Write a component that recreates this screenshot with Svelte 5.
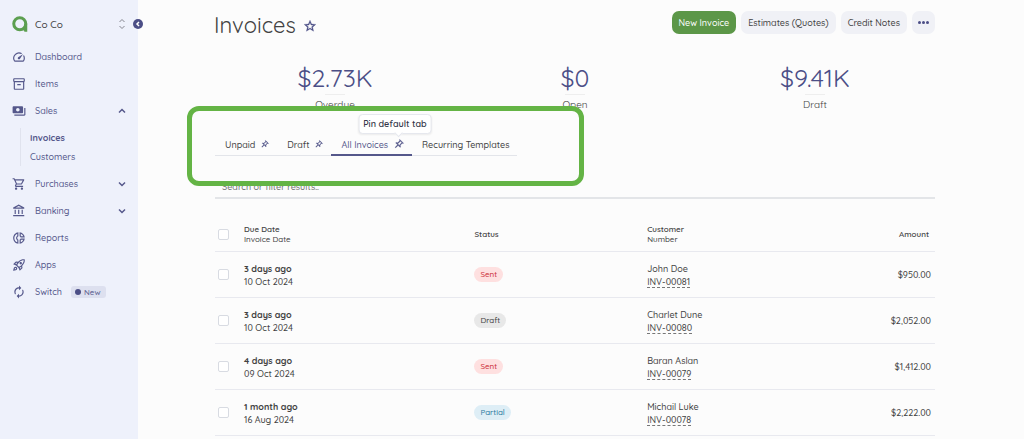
<script lang="ts">
	type Item = { label: string; icon: string; open?: boolean; children?: string[]; badge?: string }

	const icons: Record<string, string> = {
		speed: 'M20.38 8.57l-1.23 1.85a8 8 0 0 1-.22 7.58H5.07A8 8 0 0 1 15.58 6.85l1.85-1.23A10 10 0 0 0 3.35 19a2 2 0 0 0 1.72 1h13.85a2 2 0 0 0 1.74-1 10 10 0 0 0-.27-10.44zm-9.79 6.84a2 2 0 0 0 2.83 0l5.66-8.49-8.49 5.66a2 2 0 0 0 0 2.83z',
		box: 'M20 2H4c-1 0-2 .9-2 2v3.01c0 .72.43 1.34 1 1.69V20c0 1.1 1.1 2 2 2h14c.9 0 2-.9 2-2V8.7c.57-.35 1-.97 1-1.69V4c0-1.1-1-2-2-2zm-1 18H5V9h14v11zm1-13H4V4h16v3zM9 12h6v2H9z',
		payments: 'M19 14V6c0-1.1-.9-2-2-2H3c-1.1 0-2 .9-2 2v8c0 1.1.9 2 2 2h14c1.1 0 2-.9 2-2zm-9-1c-1.66 0-3-1.34-3-3s1.34-3 3-3 3 1.34 3 3-1.34 3-3 3zm13-6v11c0 1.1-.9 2-2 2H4v-2h17V7h2z',
		cart: 'M15.55 13c.75 0 1.41-.41 1.75-1.03l3.58-6.49A.996.996 0 0020.01 4H5.21l-.94-2H1v2h2l3.6 7.59-1.35 2.44C4.52 15.37 5.48 17 7 17h12v-2H7l1.1-2h7.45zM6.16 6h12.15l-2.76 5H8.53L6.16 6zM7 18c-1.1 0-1.99.9-1.99 2S5.9 22 7 22s2-.9 2-2-.9-2-2-2zm10 0c-1.1 0-1.99.9-1.99 2s.89 2 1.99 2 2-.9 2-2-.9-2-2-2z',
		bank: 'M6.5 10h-2v7h2v-7zm6 0h-2v7h2v-7zm8.5 9H2v2h19v-2zm-2.5-9h-2v7h2v-7zm-7-6.74L16.71 6H6.29l5.21-2.74m0-2.26L2 6v2h19V6l-9.5-5z',
		donut: 'M14.82 11h7.13c-.47-4.72-4.23-8.48-8.95-8.95v7.13c.85.31 1.51.97 1.82 1.82zM15 4.58C17 5.4 18.6 7 19.42 9h-3.43c-.28-.37-.62-.71-.99-.99V4.58zM2 12c0 5.19 3.95 9.45 9 9.95v-7.13C9.84 14.4 9 13.3 9 12c0-1.3.84-2.4 2-2.82V2.05c-5.05.5-9 4.76-9 9.95zm7-7.42v3.44c-1.23.92-2 2.39-2 3.98 0 1.59.77 3.06 2 3.99v3.44C6.04 18.24 4 15.35 4 12c0-3.35 2.04-6.24 5-7.42zm4 10.24v7.13c4.72-.47 8.48-4.23 8.95-8.95h-7.13c-.31.85-.97 1.51-1.82 1.82zm2 1.17c.37-.28.71-.61.99-.99h3.43C18.6 17 17 18.6 15 19.42v-3.43z',
		rocket: 'M6 15c-.83 0-1.58.34-2.12.88C2.7 17.06 2 22 2 22s4.94-.7 6.12-1.88A2.996 2.996 0 006 15zm.71 3.71c-.28.28-2.17.76-2.17.76s.47-1.88.76-2.17c.17-.19.42-.3.7-.3a1.003 1.003 0 01.71 1.71zm10.71-5.06c6.36-6.36 4.24-11.31 4.24-11.31S16.71.22 10.35 6.58l-2.49-.5a2.03 2.03 0 00-1.81.55L2 10.69l5 2.14L11.17 17l2.14 5 4.05-4.05c.47-.47.68-1.15.55-1.81l-.49-2.49zM7.41 10.83l-1.91-.82 1.97-1.97 1.44.29c-.57.83-1.08 1.7-1.5 2.5zm6.58 7.67l-.82-1.91c.8-.42 1.67-.93 2.49-1.5l.29 1.44-1.96 1.97zM16 12.24c-1.32 1.32-3.38 2.4-4.04 2.73l-2.93-2.93c.32-.65 1.4-2.71 2.73-4.04 4.68-4.68 8.23-3.99 8.23-3.99s.69 3.55-3.99 8.23zM15 11c1.1 0 2-.9 2-2s-.9-2-2-2-2 .9-2 2 .9 2 2 2z',
		renew: 'M12 6v3l4-4-4-4v3c-4.42 0-8 3.58-8 8 0 1.57.46 3.03 1.24 4.26L6.7 14.8A5.87 5.87 0 016 12c0-3.31 2.69-6 6-6zm6.76 1.74L17.3 9.2c.44.84.7 1.79.7 2.8 0 3.31-2.69 6-6 6v-3l-4 4 4 4v-3c4.42 0 8-3.58 8-8 0-1.57-.46-3.03-1.24-4.26z',
		star: 'M22 9.24l-7.19-.62L12 2 9.19 8.63 2 9.24l5.46 4.73L5.82 21 12 17.27 18.18 21l-1.63-7.03L22 9.24zM12 15.4l-3.76 2.27 1-4.28-3.32-2.88 4.38-.38L12 6.1l1.71 4.04 4.38.38-3.32 2.88 1 4.28L12 15.4z',
		pin: 'M14 4v5c0 1.12.37 2.16 1 3H9c.65-.86 1-1.9 1-3V4h4m3-2H7c-.55 0-1 .45-1 1s.45 1 1 1h1v5c0 1.66-1.34 3-3 3v2h5.97v7l1 1 1-1v-7H19v-2c-1.66 0-3-1.34-3-3V4h1c.55 0 1-.45 1-1s-.45-1-1-1z',
	}

	const menu: Item[] = [
		{ label: 'Dashboard', icon: 'speed' },
		{ label: 'Items', icon: 'box' },
		{ label: 'Sales', icon: 'payments', open: true, children: ['Invoices', 'Customers'] },
		{ label: 'Purchases', icon: 'cart', open: false },
		{ label: 'Banking', icon: 'bank', open: false },
		{ label: 'Reports', icon: 'donut' },
		{ label: 'Apps', icon: 'rocket' },
		{ label: 'Switch', icon: 'renew', badge: 'New' },
	]

	const totals = [
		{ amount: '$2.73K', label: 'Overdue' },
		{ amount: '$0', label: 'Open' },
		{ amount: '$9.41K', label: 'Draft' },
	]

	const tabs = [
		{ label: 'Unpaid', pin: true },
		{ label: 'Draft', pin: true },
		{ label: 'All Invoices', pin: true },
		{ label: 'Recurring Templates', pin: false },
	]
	let current = $state('All Invoices')

	const invoices = [
		{ due: '3 days ago', date: '10 Oct 2024', status: 'Sent', customer: 'John Doe', number: 'INV-00081', amount: '$950.00' },
		{ due: '3 days ago', date: '10 Oct 2024', status: 'Draft', customer: 'Charlet Dune', number: 'INV-00080', amount: '$2,052.00' },
		{ due: '4 days ago', date: '09 Oct 2024', status: 'Sent', customer: 'Baran Aslan', number: 'INV-00079', amount: '$1,412.00' },
		{ due: '1 month ago', date: '16 Aug 2024', status: 'Partial', customer: 'Michail Luke', number: 'INV-00078', amount: '$2,222.00' },
	]
</script>

{#snippet icon(name: string)}
	<svg class="icon" viewBox="0 0 24 24" aria-hidden="true"><path d={icons[name]} /></svg>
{/snippet}

<div class="app">
	<aside>
		<div class="company">
			<svg class="logo" viewBox="0 0 32 32" aria-hidden="true">
				<circle cx="15.500" cy="15.500" r="12" />
				<path d="M27.500 15.500V31.500M22 24l5 4" />
			</svg>
			<span>Co Co</span>
			<button class="switcher" aria-label="Switch company">
				<svg viewBox="0 0 8 12"><path d="M1.500 4L4 1.500 6.500 4M1.500 8L4 10.500 6.500 8" /></svg>
			</button>
			<button class="collapse" aria-label="Collapse menu">
				<svg viewBox="0 0 10 10"><path d="M6 3L4 5l2 2" /></svg>
			</button>
		</div>

		<nav>
			{#each menu as item}
				<a href="#{item.label.toLowerCase()}" class="item">
					{@render icon(item.icon)}
					<span>{item.label}</span>
					{#if item.badge}
						<span class="new">{item.badge}</span>
					{/if}
					{#if item.open !== undefined}
						<svg class="chevron" class:open={item.open} viewBox="0 0 8 6"><path d="M1 1.500l3 3 3-3" /></svg>
					{/if}
				</a>
				{#if item.children}
					<div class="sub">
						{#each item.children as child, i}
							<a href="#{child.toLowerCase()}" class:current={i === 0}>{child}</a>
						{/each}
					</div>
				{/if}
			{/each}
		</nav>
	</aside>

	<main>
		<header>
			<h1>Invoices</h1>
			<button class="star" aria-label="Add to favorites">{@render icon('star')}</button>
			<div class="actions">
				<button class="primary">New Invoice</button>
				<button>Estimates (Quotes)</button>
				<button>Credit Notes</button>
				<button class="more" aria-label="More actions"><i></i><i></i><i></i></button>
			</div>
		</header>

		<div class="totals">
			{#each totals as total}
				<a href="#{total.label.toLowerCase()}">
					<strong>{total.amount}</strong>
					<hr />
					<span>{total.label}</span>
				</a>
			{/each}
		</div>

		<div class="tabs-area">
			<div class="tabs">
				{#each tabs as tab}
					<div class="tab" class:active={current === tab.label}>
						<button onclick={() => (current = tab.label)}>{tab.label}</button>
						{#if tab.pin}
							<button class="pin" aria-label="Pin {tab.label}">
								{@render icon('pin')}
								{#if current === tab.label}
									<span class="tooltip">Pin default tab</span>
								{/if}
							</button>
						{/if}
					</div>
				{/each}
			</div>
			<div class="highlight"></div>
		</div>

		<input class="search" type="text" placeholder="Search or filter results.." aria-label="Search or filter results" />

		<table>
			<thead>
				<tr>
					<th class="check"><input type="checkbox" aria-label="Select all invoices" /></th>
					<th class="date">Due Date<br /><span>Invoice Date</span></th>
					<th class="status">Status</th>
					<th>Customer<br /><span>Number</span></th>
					<th class="amount">Amount</th>
				</tr>
			</thead>
			<tbody>
				{#each invoices as invoice}
					<tr>
						<td><input type="checkbox" aria-label="Select {invoice.number}" /></td>
						<td><b>{invoice.due}</b><br />{invoice.date}</td>
						<td><span class="pill {invoice.status.toLowerCase()}">{invoice.status}</span></td>
						<td>
							{invoice.customer}<br />
							<a href="#{invoice.number}">{invoice.number}</a>
						</td>
						<td class="amount">{invoice.amount}</td>
					</tr>
				{/each}
			</tbody>
		</table>
	</main>
</div>

<style>
	:global(body) {
		background: #fcfcfc;
	}

	.app {
		display: flex;
		min-height: 100vh;
		font-family: Quicksand, Lato, sans-serif;
		font-size: 9px;
		font-weight: 500;
		color: #424242;
	}

	button {
		padding: 0;
		border: 0;
		background: none;
		font: inherit;
		color: inherit;
		cursor: pointer;
	}

	a {
		color: inherit;
		text-decoration: none;
	}

	.icon {
		display: block;
		flex: none;
		width: 14px;
		height: 14px;
		fill: currentColor;
	}

	aside {
		flex: none;
		box-sizing: border-box;
		width: 138px;
		padding: 5px 12px 0;
		background: #eef1fb;
		color: #55588b;
	}

	.company {
		position: relative;
		display: flex;
		align-items: center;
		height: 38px;
		font-size: 10px;
		color: #424242;
	}

	.company span {
		flex: 1;
		margin-left: 7px;
	}

	.logo {
		width: 16px;
		height: 16px;
		fill: none;
		stroke: #5c9f50;
		stroke-width: 6;
	}

	.switcher svg {
		display: block;
		width: 8px;
		height: 12px;
		fill: none;
		stroke: #85868f;
	}

	.collapse {
		position: absolute;
		right: -17px;
		width: 10px;
		height: 10px;
		border-radius: 50%;
		background: #4b4e86;
	}

	.collapse svg {
		display: block;
		fill: none;
		stroke: #fff;
		stroke-width: 1.5;
	}

	.item {
		display: flex;
		align-items: center;
		height: 27px;
	}

	.item > span {
		margin-left: 9px;
	}

	.chevron {
		width: 8px;
		height: 6px;
		margin-left: auto;
		fill: none;
		stroke: currentColor;
		stroke-width: 1.5;
	}

	.chevron.open {
		transform: rotate(180deg);
	}

	.item .new {
		display: flex;
		align-items: center;
		gap: 3px;
		height: 12px;
		padding: 0 5px 0 4px;
		border-radius: 3px;
		background: #dde0ef;
		font-size: 8px;
	}

	.new::before {
		content: '';
		width: 6px;
		height: 6px;
		border-radius: 50%;
		background: #4b4e86;
	}

	.sub {
		display: flex;
		flex-direction: column;
		margin: 4px 0 4px 8px;
		padding-left: 9px;
		border-left: 1px solid #e0e3ee;
		line-height: 19px;
	}

	.current {
		font-weight: 700;
	}

	main {
		flex: 1;
		padding: 0 89px 0 77px;
	}

	header {
		display: flex;
		align-items: center;
		height: 49px;
	}

	h1 {
		margin: 0 0 0 -1px;
		font-size: 22px;
		font-weight: 400;
	}

	.star {
		margin-left: 7px;
		padding-top: 3px;
		color: #4b4e86;
	}

	.star .icon {
		stroke: currentColor;
		stroke-width: 0.5;
	}

	.actions {
		display: flex;
		gap: 5px;
		margin: 0 0 4px auto;
	}

	.actions button {
		display: flex;
		align-items: center;
		height: 23px;
		padding: 0 7px;
		border-radius: 7px;
		background: #f0f1f6;
	}

	.actions .primary {
		background: #5c9748;
		color: #fff;
	}

	.actions .more {
		gap: 1px;
		padding: 0 6px;
	}

	.more i {
		width: 3px;
		height: 3px;
		border-radius: 50%;
		background: #4b4e86;
	}

	.totals {
		display: grid;
		grid-template-columns: repeat(3, 1fr);
		padding-top: 14px;
		text-align: center;
	}

	.totals strong {
		display: block;
		padding-bottom: 2px;
		font-size: 25px;
		font-weight: 400;
		line-height: 29px;
		color: #4b4e86;
	}

	.totals hr {
		width: 20px;
		margin: 0 auto 3px;
		border: 0;
		border-top: 1px solid #eee;
	}

	.totals span {
		display: block;
		font-size: 10px;
		font-weight: 400;
		line-height: 14px;
	}

	.tabs-area {
		position: relative;
		display: flex;
		margin-top: 21px;
	}

	.highlight {
		position: absolute;
		box-sizing: border-box;
		top: -27px;
		left: -28px;
		width: 397px;
		height: 80px;
		border: 5px solid #64b445;
		border-radius: 12px;
		pointer-events: none;
	}

	.tabs {
		display: flex;
		border-bottom: 1px solid #e3e5ea;
	}

	.tab {
		display: flex;
		align-items: center;
		gap: 5px;
		height: 22px;
		padding: 0 8px 0 10px;
	}

	.tab.active {
		box-shadow: 0 1px #55588b, inset 0 -1px #55588b;
		color: #55588b;
	}

	.pin {
		position: relative;
		color: #55588b;
	}

	.pin .icon {
		width: 9px;
		height: 9px;
		stroke: currentColor;
		stroke-width: 0.5;
		transform: rotate(45deg);
	}

	.active .pin .icon {
		width: 11px;
		height: 11px;
	}

	.tooltip {
		position: absolute;
		bottom: 16px;
		left: 50%;
		padding: 0 4px;
		border: 1px solid #e6e8ee;
		border-radius: 4px;
		background: #fff;
		box-shadow: 0 1px 2px #0001;
		font-weight: 600;
		line-height: 18px;
		white-space: nowrap;
		color: #333648;
		transform: translateX(-55%);
	}

	.tooltip::after {
		content: '';
		position: absolute;
		bottom: -3px;
		left: 55%;
		width: 5px;
		height: 5px;
		margin-left: -3px;
		border: solid #e6e8ee;
		border-width: 0 1px 1px 0;
		background: #fff;
		transform: rotate(45deg);
	}

	.search {
		display: block;
		box-sizing: border-box;
		width: 100%;
		height: 24px;
		margin-top: 19px;
		padding: 0 7px;
		border: 0;
		border-bottom: 2px solid #e3e5e8;
		background: none;
		font: inherit;
		outline: none;
	}

	.search::placeholder {
		color: #6f6f6f;
	}

	table {
		width: 100%;
		margin-top: 18px;
		border-collapse: collapse;
		table-layout: fixed;
		line-height: 13px;
	}

	th,
	td {
		height: 45px;
		padding: 0;
		border-bottom: 1px solid #e8e9ef;
		text-align: left;
	}

	th {
		height: 34px;
		font-size: 8px;
		font-weight: 600;
		line-height: 10px;
	}

	th span {
		font-weight: 500;
	}

	.check {
		width: 29px;
	}

	.date {
		width: 32%;
	}

	.status {
		width: 24%;
	}

	.amount {
		padding-right: 4px;
		text-align: right;
	}

	th.amount {
		padding-right: 6px;
	}

	table input {
		display: block;
		appearance: none;
		box-sizing: border-box;
		width: 11px;
		height: 11px;
		margin: 0 0 0 3px;
		border: 1px solid #d8dbe2;
		border-radius: 2px;
		background: #fff;
	}

	table input:checked {
		background: #55588b;
	}

	td a {
		display: inline-block;
		line-height: 11px;
		border-bottom: 1px dashed #777;
	}

	.pill {
		display: inline-block;
		padding: 0 6px;
		border-radius: 8px;
		font-size: 8px;
		line-height: 15px;
	}

	.sent {
		background: #fee0e0;
		color: #cc2f38;
	}

	.draft {
		background: #e8e8e8;
	}

	.partial {
		background: #deeef6;
		color: #2c7a9f;
	}
</style>
